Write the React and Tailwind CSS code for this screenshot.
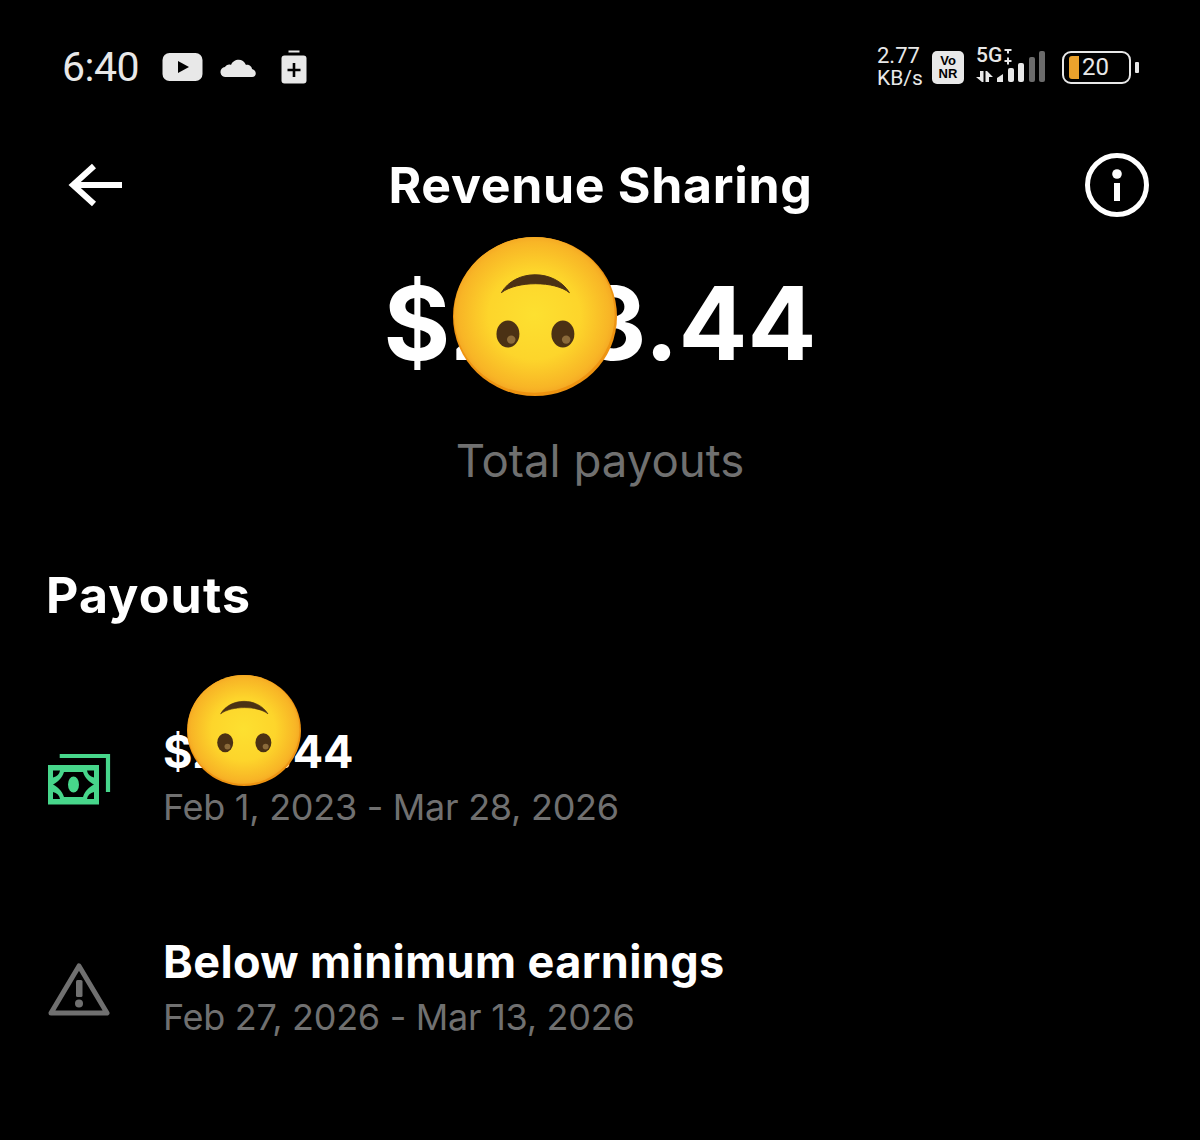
import React from 'react';

const Emoji = ({ id, className }) => (
  <svg viewBox="0 0 100 100" preserveAspectRatio="none" className={className}>
    <defs>
      <radialGradient id={id} cx="50%" cy="50%" r="52%">
        <stop offset="0%" stopColor="#fde030" />
        <stop offset="55%" stopColor="#fdd52b" />
        <stop offset="90%" stopColor="#f8b526" />
        <stop offset="100%" stopColor="#f3a423" />
      </radialGradient>
    </defs>
    <circle cx="50" cy="50" r="50" fill="#ee9411" />
    <circle cx="49.6" cy="49" r="49" fill={`url(#${id})`} />
    <path d="M29.5 35 C38 20 62 20 71 35 C62 27.5 39 27.5 29.5 35 Z" fill="#4b3114" stroke="#4b3114" strokeWidth="0.6" strokeLinejoin="round" />
    <ellipse cx="33.5" cy="61" rx="7" ry="8.5" fill="#4b3114" />
    <ellipse cx="67" cy="61" rx="7" ry="8.5" fill="#4b3114" />
    <circle cx="35.5" cy="64.5" r="2.6" fill="#8b6a3a" />
    <circle cx="69" cy="64.5" r="2.6" fill="#8b6a3a" />
  </svg>
);

const StatusBar = () => (
  <div className="flex h-[134px] items-center justify-between pl-[62px] pr-[61px] text-[#e8e8e8]">
    <div className="flex items-center">
      <span className="w-[100px] font-['Roboto',sans-serif] text-[41px] leading-none tracking-[-0.5px]">6:40</span>
      <svg viewBox="0 0 42 30" className="h-[30px] w-[42px]">
        <rect x="0.5" y="1" width="40" height="28" rx="7" fill="#e8e8e8" />
        <path d="M16 9 L27 15 L16 21 Z" fill="#000" />
      </svg>
      <svg viewBox="0 0 38 22" className="ml-[16px] h-[22px] w-[38px]">
        <path d="M6 21 a5 5 0 0 1 -1 -10 C6 9 9 8 11 9 C13 3 23 1 26 9 C29 8 32 11 32 13 C37 14 37 21 32 21 Z" fill="#e8e8e8" />
      </svg>
      <svg viewBox="0 0 26 34" className="ml-[23px] h-[34px] w-[26px]">
        <rect x="7.5" y="0.5" width="11" height="2" fill="#e8e8e8" />
        <rect x="0.5" y="5.5" width="25" height="28" rx="3" fill="#e8e8e8" />
        <path d="M13 13 V27 M6.5 20 H19.5" stroke="#000" strokeWidth="2.6" />
      </svg>
    </div>
    <div className="flex items-center">
      <div className="w-[55px] font-['Roboto',sans-serif] leading-[22px]">
        <div className="text-[22px]">2.77</div>
        <div className="text-[21px]">KB/s</div>
      </div>
      <div className="flex h-[33px] w-[32px] flex-col items-center justify-center rounded-[5px] bg-[#e8e8e8] font-['Liberation_Sans',sans-serif] text-[13px] font-bold leading-[13px] text-black">
        <span>Vo</span>
        <span>NR</span>
      </div>
      <div className="relative ml-[12px] h-[36px] w-[70px]">
        <span className="absolute left-0 top-[-6px] font-['Roboto',sans-serif] text-[21px] font-medium leading-[24px]">5G</span>
        <svg viewBox="0 0 70 36" className="h-[36px] w-[70px]">
          <path d="M28.5 1 H35.5 M32 -2.5 V4.5 M28.5 12 H35.5 M32 8.5 V15.5" stroke="#e8e8e8" strokeWidth="2" />
          <path d="M0 28 L4 28 V22 H7.5 V33 H6 Z M9.5 33 V22 H11 L17 28 H13 V33 Z" fill="#e8e8e8" />
          <path d="M21 33 V29 L27 25 V33 Z" fill="#e8e8e8" />
          <rect x="32" y="19" width="6" height="14" rx="2" fill="#e8e8e8" />
          <rect x="42" y="14" width="6" height="19" rx="2" fill="#e8e8e8" />
          <rect x="53" y="8" width="6" height="25" rx="2" fill="#6b6b6b" />
          <rect x="63" y="2" width="6" height="31" rx="2" fill="#6b6b6b" />
        </svg>
      </div>
      <div className="ml-[16px] flex items-center">
        <div className="flex h-[33px] w-[69px] items-center rounded-[9px] border-[2.5px] border-[#e8e8e8] pl-[5px]">
          <div className="h-[23px] w-[10px] rounded-l-[3px] bg-[#eba22c]" />
          <span className="ml-[3px] font-['Roboto',sans-serif] text-[24px] leading-none">20</span>
        </div>
        <div className="ml-[4px] h-[11px] w-[4px] rounded-[1px] bg-[#e8e8e8]" />
      </div>
    </div>
  </div>
);

const Header = () => (
  <div className="flex h-[102px] items-center justify-between pl-[68px] pr-[51px]">
    <svg viewBox="0 0 56 44" className="h-[44px] w-[56px]">
      <path d="M26 3 L5 22 L26 41 M5 22 H54" fill="none" stroke="#fff" strokeWidth="6" />
    </svg>
    <h1 className="mr-[8px] font-['Inter',sans-serif] text-[50px] font-bold leading-none tracking-[0.7px] text-white">Revenue Sharing</h1>
    <svg viewBox="0 0 64 64" className="h-[64px] w-[64px]">
      <circle cx="32" cy="32" r="29.5" fill="none" stroke="#fff" strokeWidth="5" />
      <circle cx="32" cy="21" r="4.8" fill="#fff" />
      <rect x="29" y="30" width="6" height="18" fill="#fff" />
    </svg>
  </div>
);

const Row = ({ icon, title, sub, className, titleClass }) => (
  <div className={`flex items-center pl-[48px] ${className}`}>
    <div className="w-[115px]">{icon}</div>
    <div className="font-['Inter',sans-serif]">
      <div className={`text-[45px] font-bold leading-[54px] text-white ${titleClass}`}>{title}</div>
      <div className="text-[36px] leading-[56px] tracking-[-0.28px] text-[#707070]">{sub}</div>
    </div>
  </div>
);

const MoneyIcon = () => (
  <svg viewBox="0 0 63 52" className="h-[52px] w-[63px]">
    <path d="M11.7 2 H60 V38" fill="none" stroke="#47d68b" strokeWidth="4.2" />
    <rect y="11" width="51" height="39.5" fill="#47d68b" />
    {/* centre of the note */}
    <path d="M5 30.5 C10 28 14 24 16 18 H35 C37 24 41 28 46 30.5 C41 33 37 37 35 43 H16 C14 37 10 33 5 30.5 Z" fill="#000" />
    <ellipse cx="25.5" cy="30.5" rx="5.5" ry="8" fill="#47d68b" />
    {/* corners */}
    <path d="M5 16.5 H12 C11.5 20 9 22.5 5 23.5 Z" fill="#000" />
    <path d="M46 16.5 H39 C39.5 20 42 22.5 46 23.5 Z" fill="#000" />
    <path d="M5 45 H12 C11.5 41.5 9 39 5 38 Z" fill="#000" />
    <path d="M46 45 H39 C39.5 41.5 42 39 46 38 Z" fill="#000" />
  </svg>
);

const WarningIcon = () => (
  <svg viewBox="0 0 62 56" className="h-[56px] w-[62px]">
    <path d="M31 4 L59 51 H3 Z" fill="none" stroke="#707070" strokeWidth="5" strokeLinejoin="round" />
    <rect x="28" y="18" width="6.5" height="17" rx="1.5" fill="#707070" />
    <circle cx="31" cy="41.5" r="4" fill="#707070" />
  </svg>
);

export default function App() {
  return (
    <div className="h-[1140px] w-[1200px] overflow-hidden bg-black">
      <StatusBar />
      <Header />

      {/* total */}
      <div className="relative mt-[30px] text-center font-['Inter',sans-serif] text-[102px] font-bold leading-[114px] text-white">
        $283.44
        <Emoji id="bigFace" className="absolute left-[453px] top-[-29px] h-[159px] w-[164px]" />
      </div>
      <div className="mt-[54px] text-center font-['Inter',sans-serif] text-[45.6px] leading-[54px] text-[#707070]">Total payouts</div>

      {/* payouts */}
      <h2 className="mt-[80px] pl-[46px] font-['Inter',sans-serif] text-[50px] font-bold leading-[54px] tracking-[1.2px] text-white">Payouts</h2>

      <div className="relative">
        <Row
          className="mt-[103px]"
          titleClass="tracking-[-0.1px]"
          icon={<MoneyIcon />}
          title="$283.44"
          sub="Feb 1, 2023 - Mar 28, 2026"
        />
        <Emoji id="smallFace" className="absolute left-[187px] top-[-50px] h-[111px] w-[114px]" />
      </div>
      <Row
        className="mt-[100px]"
        titleClass="tracking-[0.4px]"
        icon={<WarningIcon />}
        title="Below minimum earnings"
        sub="Feb 27, 2026 - Mar 13, 2026"
      />
    </div>
  );
}
